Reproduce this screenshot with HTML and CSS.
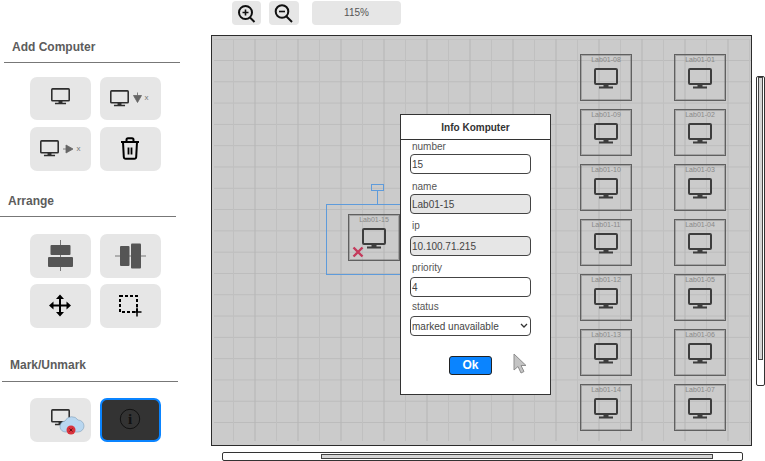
FILE: index.html
```html
<!DOCTYPE html>
<html>
<head>
<meta charset="utf-8">
<title>Lab layout</title>
<link rel="stylesheet" href="styles.css">
</head>

<body>
<svg class="defs" width="0" height="0">
	<symbol id="monitor" viewBox="0 0 24 22">
		<rect x="1" y="1" width="22" height="15" rx="1" fill="none" stroke="currentColor" stroke-width="2"/>
		<path d="M9.500 16h5v2.500h4.500v2h-14v-2h4.500z" fill="currentColor"/>
	</symbol>
</svg>

<aside class="sidebar">
	<section class="group group_add">
		<h2>Add Computer</h2>
		<div class="btns">
			<button class="btn"><svg viewBox="0 0 61 44"><use href="#monitor" x="21" y="11" width="19" height="17.500"/></svg></button>
			<button class="btn"><svg viewBox="0 0 61 44"><use href="#monitor" x="10" y="13" width="19" height="17.500"/><path class="gray" d="M37.500 15.500v3M33.500 18.500h8l-4 7z"/><text x="44.500" y="22.500" class="tiny">x</text></svg></button>
			<button class="btn"><svg viewBox="0 0 61 44"><use href="#monitor" x="10" y="13" width="19" height="17.500"/><path class="gray" d="M33 22h3M36 18l7 4-7 4z"/><text x="46.500" y="23.500" class="tiny">x</text></svg></button>
			<button class="btn"><svg viewBox="0 0 61 44"><path d="M21 15h18M23 15l.8 15a2 2 0 0 0 2 1.800h8.400a2 2 0 0 0 2-1.800l.8-15M26.500 15v-2.200a1.500 1.500 0 0 1 1.500-1.500h4a1.500 1.500 0 0 1 1.500 1.500v2.200" fill="none" stroke="#000" stroke-width="2"/><path d="M28.500 20.500v7M31.500 20.500v7" stroke="#000" stroke-width="1.800"/></svg></button>
		</div>
	</section>

	<section class="group group_arrange">
		<h2>Arrange</h2>
		<div class="btns">
			<button class="btn"><svg viewBox="0 0 61 44"><path d="M30.500 6v31" stroke="#777"/><rect x="20.500" y="11" width="20" height="10" rx="1" fill="#555"/><rect x="18" y="23" width="25" height="10" rx="1" fill="#555"/></svg></button>
			<button class="btn"><svg viewBox="0 0 61 44"><path d="M15 22h31" stroke="#777"/><rect x="20" y="12" width="9.500" height="20" rx="1" fill="#555"/><rect x="31" y="9.500" width="10" height="25" rx="1" fill="#555"/></svg></button>
			<button class="btn"><svg viewBox="0 0 61 44"><path d="M30 13v17M21.500 21.500h17" stroke="#000" stroke-width="2"/><path d="M30 10.500l-4 4.500h8zM30 32.500l-4-4.500h8zM19 21.500l4.500-4v8zM41 21.500l-4.500-4v8z" fill="#000"/></svg></button>
			<button class="btn"><svg viewBox="0 0 61 44"><rect x="20" y="12" width="17" height="16" fill="none" stroke="#000" stroke-width="2" stroke-dasharray="3 2"/><path d="M37 23.500v9M32.500 28h9" stroke="#000" stroke-width="1.500"/></svg></button>
		</div>
	</section>

	<section class="group group_mark">
		<h2>Mark/Unmark</h2>
		<div class="btns">
			<button class="btn"><svg viewBox="0 0 61 44"><use href="#monitor" x="21" y="11" width="19" height="17.500"/><path d="M36 34a5.500 5.500 0 0 1-1-11a7.500 7.500 0 0 1 13-1a6 6 0 0 1 0 12z" fill="#b9d7f0" stroke="#7f9db8" stroke-width=".6"/><circle cx="41" cy="32" r="4.500" fill="#d8323c"/><path d="M39.500 30.500l3 3M42.500 30.500l-3 3" stroke="#6d1016"/></svg></button>
			<button class="btn btn_on"><svg viewBox="0 0 61 44"><circle cx="30" cy="21" r="9.700" fill="none" stroke="#111"/><text x="30" y="26" class="info">i</text></svg></button>
		</div>
	</section>
</aside>

<div class="main">
	<div class="toolbar">
		<button class="tool"><svg viewBox="0 0 29 24"><circle cx="13.500" cy="11.500" r="6.500" fill="none" stroke="#111" stroke-width="2"/><path d="M18 16.500l4.500 4.500" stroke="#111" stroke-width="2"/><path d="M10.500 11.500h6M13.500 8.500v6" stroke="#111" stroke-width="1.600"/></svg></button>
		<button class="tool"><svg viewBox="0 0 30 24"><circle cx="13" cy="10.500" r="6.300" fill="none" stroke="#111" stroke-width="2"/><path d="M17.500 15.500l5.500 5.500" stroke="#111" stroke-width="2"/><path d="M10 10.500h6" stroke="#111" stroke-width="1.600"/></svg></button>
		<div class="zoom_value">115%</div>
	</div>

	<div class="stage">
		<div class="canvas">
			<div class="grid"></div>

			<div class="nodes">
				<div class="node"><span>Lab01-08</span><svg><use href="#monitor"/></svg></div>
				<div class="node"><span>Lab01-01</span><svg><use href="#monitor"/></svg></div>
				<div class="node"><span>Lab01-09</span><svg><use href="#monitor"/></svg></div>
				<div class="node"><span>Lab01-02</span><svg><use href="#monitor"/></svg></div>
				<div class="node"><span>Lab01-10</span><svg><use href="#monitor"/></svg></div>
				<div class="node"><span>Lab01-03</span><svg><use href="#monitor"/></svg></div>
				<div class="node"><span>Lab01-11</span><svg><use href="#monitor"/></svg></div>
				<div class="node"><span>Lab01-04</span><svg><use href="#monitor"/></svg></div>
				<div class="node"><span>Lab01-12</span><svg><use href="#monitor"/></svg></div>
				<div class="node"><span>Lab01-05</span><svg><use href="#monitor"/></svg></div>
				<div class="node"><span>Lab01-13</span><svg><use href="#monitor"/></svg></div>
				<div class="node"><span>Lab01-06</span><svg><use href="#monitor"/></svg></div>
				<div class="node"><span>Lab01-14</span><svg><use href="#monitor"/></svg></div>
				<div class="node"><span>Lab01-07</span><svg><use href="#monitor"/></svg></div>
			</div>

			<div class="sel_box"></div>
			<div class="sel_stem"></div>
			<div class="sel_handle"></div>
			<div class="node node_sel">
				<span>Lab01-15</span><svg><use href="#monitor"/></svg>
				<svg class="mark_x" viewBox="0 0 12 12"><path d="M1.500 1.500l9 9M10.500 1.500l-9 9" stroke="#c43a5c" stroke-width="2.400"/></svg>
			</div>

			<form class="dialog">
				<h3>Info Komputer</h3>
				<div class="fields">
					<label class="f_number">number</label>
					<input type="text" value="15">
					<label class="f_name">name</label>
					<input type="text" value="Lab01-15" class="locked" readonly>
					<label class="f_ip">ip</label>
					<input type="text" value="10.100.71.215" class="locked" readonly>
					<label class="f_priority">priority</label>
					<input type="text" value="4">
					<label class="f_status">status</label>
					<div class="select_wrap">
						<select>
							<option>marked unavailable</option>
							<option>available</option>
						</select>
						<svg class="chevron" viewBox="0 0 8 5"><path d="M1 1l3 3 3-3" fill="none" stroke="#333" stroke-width="1.300"/></svg>
					</div>
					<div class="actions">
						<button type="button" class="ok">Ok</button>
						<svg class="pointer" viewBox="0 0 14 21"><path d="M1 1v16l4-3.500 3 6.500 3-1.500-3-6h5z" fill="#c4c4c4" stroke="#8e8e8e"/></svg>
					</div>
				</div>
			</form>
		</div>
		<div class="vbar"><div class="vthumb"></div></div>
	</div>

	<div class="hbar"><div class="hthumb"></div></div>
</div>
</body>

</html>
```

FILE: styles.css
```css
html,body{margin: 0;padding: 0;}
body{display: flex;width: 765px;height: 461px;overflow: hidden;background: #fff;font-family: "Liberation Sans",Arial,sans-serif;color: #555;}
button{padding: 0;font-family: inherit;}
.defs{position: absolute;}

/* sidebar */
.sidebar{flex: none;width: 211px;}
.group h2{margin: 0;padding: 0 0 8px 8px;font-size: 12px;line-height: 14px;color: #5c5c5c;border-bottom: 1px solid #777;}
.group{width: 176px;}
.group_add{margin: 40px 0 0 4px;}
.group_arrange{margin: 23px 0 0 0;}
.group_mark{margin: 30px 0 0 2px;}
.group_mark h2{padding-bottom: 9px;}
.btns{display: grid;grid-template-columns: 61px 61px;column-gap: 9px;}
.group_add .btns{margin: 14px 0 0 26px;row-gap: 7px;grid-template-rows: 43px 44px;}
.group_arrange .btns{margin: 17px 0 0 30px;row-gap: 6px;grid-template-rows: 44px 44px;}
.group_mark .btns{margin: 16px 0 0 28px;grid-template-rows: 44px;}
.btn{display: block;width: 61px;height: 100%;border: 0;border-radius: 7px;background: #e6e6e6;}
.btn svg{display: block;width: 61px;height: 44px;color: #2e2e2e;}
.btn_on{background: #333;border: 2px solid #0a84ff;box-sizing: border-box;}
.btn_on svg{margin: -2px;}
.gray{fill: #666;stroke: #666;stroke-width: .8;}
.tiny{font-size: 8px;fill: #777;}
.info{font-family: "Liberation Serif",serif;font-size: 15px;font-weight: bold;fill: #111;text-anchor: middle;}

/* top tools */
.main{flex: none;width: 554px;}
.toolbar{display: flex;height: 24px;margin: 1px 0 10px 21px;}
.tool{width: 29px;height: 24px;margin-right: 8px;border: 0;border-radius: 4px;background: #e6e6e6;}
.tool + .tool{width: 30px;margin-right: 13px;}
.tool svg{display: block;width: 100%;height: 24px;}
.zoom_value{width: 89px;border-radius: 4px;background: #e6e6e6;font-size: 10px;line-height: 24px;text-align: center;}

/* canvas */
.stage{display: flex;align-items: flex-start;}
.canvas{position: relative;flex: none;box-sizing: border-box;width: 541px;height: 411px;border: 1px solid #2c2c2c;background: #cbcbcb;overflow: hidden;}
.grid{position: absolute;left: 2px;top: 3px;right: 0;bottom: 4px;
	background-image:
		linear-gradient(90deg,#c0c0c0 1px,transparent 1px),
		linear-gradient(90deg,#b5b5b5 1px,transparent 1px),
		linear-gradient(#bcbcbc 1px,transparent 1px);
	background-size: 43px 100%,43px 100%,100% 21.3px;
	background-position: 19px 0,40.500px 0,0 21px;
}
.nodes{position: absolute;left: 368px;top: 18px;display: grid;grid-template-columns: 52px 52px;grid-auto-rows: 47px;column-gap: 42px;row-gap: 8px;}
.node{box-sizing: border-box;width: 52px;height: 47px;border: 1px solid #606060;outline: 1px solid rgba(90,90,90,.35);outline-offset: -2px;text-align: center;color: #3d3d3d;}
.node span{display: block;font-size: 7px;line-height: 10px;color: #888;}
.node svg{display: block;width: 24px;height: 22px;margin: 3px 0 0 13px;}
.node_sel{position: absolute;left: 136px;top: 178px;}
.mark_x{position: absolute;left: 3px;top: 31px;width: 12px !important;height: 12px !important;margin: 0 !important;}
.sel_box{position: absolute;left: 114px;top: 168px;width: 120px;height: 69px;border: 1px solid #5e9bdb;}
.sel_stem{position: absolute;left: 165px;top: 154px;width: 1px;height: 14px;background: #5e9bdb;}
.sel_handle{position: absolute;left: 159px;top: 148px;width: 11px;height: 5px;border: 1px solid #5e9bdb;}

/* info dialog */
.dialog{position: absolute;left: 188px;top: 78px;box-sizing: border-box;width: 151px;height: 281px;border: 1px solid #333;background: #fff;}
.dialog h3{margin: 0;height: 24px;border-bottom: 1px solid #333;font-size: 10px;line-height: 26px;text-align: center;color: #333;}
.fields{display: flex;flex-direction: column;align-items: flex-start;padding-left: 9px;}
.fields label{display: block;padding-left: 2px;font-size: 10px;line-height: 12px;color: #555;}
.fields input,.fields select{box-sizing: border-box;width: 121px;height: 20px;padding: 0 0 0 1px;border: 1px solid #444;border-radius: 4px;background: #fff;font-family: inherit;font-size: 10px;color: #444;outline: 0;}
.fields input.locked{background: #e6e6e6;}
.fields select{display: block;appearance: none;}
.select_wrap{position: relative;}
.chevron{position: absolute;right: 3px;top: 7px;width: 8px;height: 5px;}
.f_number{margin: 1px 0 1px;}
.f_name{margin: 7px 0 1px;}
.f_ip{margin: 6px 0 4px;}
.f_priority{margin: 6px 0 3px;}
.f_status{margin: 4px 0 3px;}
.actions{display: flex;align-items: flex-start;margin: 20px 0 0 39px;}
.ok{width: 43px;height: 19px;border: 1px solid #222;border-radius: 3px;background: #0a84ff;color: #fff;font-size: 12px;font-weight: bold;line-height: 17px;}
.pointer{width: 14px;height: 21px;margin: -3px 0 0 21px;}

/* scrollbars */
.vbar{box-sizing: border-box;width: 9px;height: 310px;margin: 41px 0 0 4px;border: 1px solid #333;border-radius: 2px;background: #fff;}
.vthumb{box-sizing: border-box;width: 5px;height: 283px;margin: 0 auto;border: 1px solid #444;background: #d6d6d6;}
.hbar{box-sizing: border-box;width: 521px;height: 9px;margin: 6px 0 0 11px;padding: 1px 0 0 98px;border: 1px solid #333;border-radius: 2px;background: #fff;}
.hthumb{box-sizing: border-box;width: 392px;height: 5px;border: 1px solid #444;background: #d6d6d6;}
```
